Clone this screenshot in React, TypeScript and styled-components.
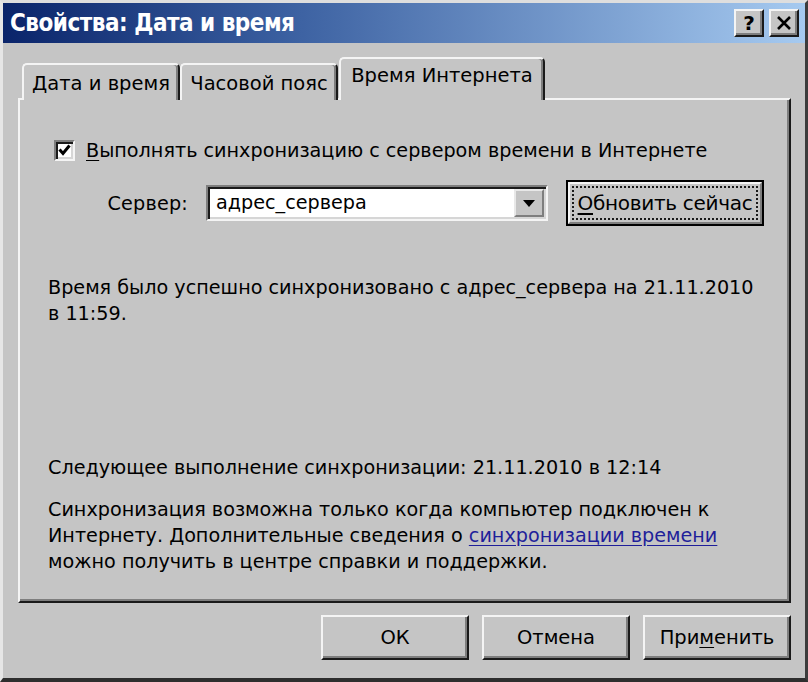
import React from "react";
import styled, { createGlobalStyle, css } from "styled-components";

const FONT = `"DejaVu Sans", "Liberation Sans", sans-serif`;

const GlobalStyle = createGlobalStyle`
  html, body {
    margin: 0;
    padding: 0;
    background: #c5c5c5;
  }
  body {
    font-family: ${FONT};
    color: #000;
  }
`;

const raised = css`
  border-top: 2px solid #f4f4f4;
  border-left: 2px solid #f4f4f4;
  border-right: 2px solid #1a1a1a;
  border-bottom: 2px solid #1a1a1a;
  box-shadow: inset -2px -2px 0 #7e7e7e;
`;

const sunken = css`
  border-top: 2px solid #7e7e7e;
  border-left: 2px solid #7e7e7e;
  border-right: 2px solid #f4f4f4;
  border-bottom: 2px solid #f4f4f4;
  box-shadow: inset 2px 2px 0 #1a1a1a, inset -2px -2px 0 #d6d6d6;
`;

const Window = styled.div`
  width: 808px;
  height: 682px;
  box-sizing: border-box;
  background: #c5c5c5;
  border-top: 3px solid #dedede;
  border-left: 3px solid #e6e6e6;
  border-right: 3px solid #3c3c3c;
  border-bottom: 4px solid #2e2e2e;
  display: flex;
  flex-direction: column;
`;

const TitleBar = styled.div`
  height: 40px;
  flex: none;
  display: flex;
  align-items: center;
  padding: 0 6px 0 7px;
  background: linear-gradient(90deg, #0a246a 0%, #3a5fa0 35%, #a6caf0 100%);
`;

const Caption = styled.div`
  flex: 1;
  color: #fff;
  font-family: "DejaVu Sans Condensed", "DejaVu Sans", sans-serif;
  font-weight: bold;
  font-size: 24px;
  letter-spacing: -0.5px;
  transform-origin: left center;
`;

const CaptionButton = styled.div`
  width: 30px;
  height: 28px;
  box-sizing: border-box;
  margin-left: 5px;
  background: #c5c5c5;
  ${raised};
  display: flex;
  align-items: center;
  justify-content: center;
  font-weight: bold;
  font-size: 20px;
`;

const Body = styled.div`
  flex: 1;
  display: flex;
  flex-direction: column;
  padding: 14px 15px 0 15px;
`;

const TabRow = styled.div`
  height: 43px;
  display: flex;
  align-items: flex-end;
  padding-left: 4px;
  position: relative;
  z-index: 1;
  margin-bottom: -2px;
`;

const Tab = styled.div<{ $active?: boolean; $w: number }>`
  box-sizing: border-box;
  width: ${(p) => p.$w}px;
  height: ${(p) => (p.$active ? 43 : 37)}px;
  margin-right: ${(p) => (p.$active ? "-2px" : "0")};
  margin-left: ${(p) => (p.$active ? "1px" : "0")};
  padding-top: ${(p) => (p.$active ? 5 : 7)}px;
  text-align: center;
  font-size: 19.5px;
  background: #c5c5c5;
  border-top: 2px solid #f4f4f4;
  border-left: 2px solid #f4f4f4;
  border-right: 2px solid #1a1a1a;
  border-radius: 5px 5px 0 0;
  box-shadow: inset -2px 0 0 #7e7e7e;
  ${(p) => p.$active && css`z-index: 2;`}
`;

const Panel = styled.div`
  height: 505px;
  box-sizing: border-box;
  width: 773px;
  border-top: 2px solid #f4f4f4;
  border-left: 2px solid #f4f4f4;
  border-right: 2px solid #1a1a1a;
  border-bottom: 2px solid #1a1a1a;
  box-shadow: inset -2px -2px 0 #7e7e7e;
  padding: 38px 0 0 30px;
  font-size: 19.2px;
  display: flex;
  flex-direction: column;
`;

const CheckRow = styled.div`
  display: flex;
  align-items: center;
  height: 24px;
  padding-left: 4px;
`;

const CheckBox = styled.div`
  width: 21px;
  height: 21px;
  box-sizing: border-box;
  background: #fff;
  ${sunken};
  display: flex;
  align-items: center;
  justify-content: center;
  margin-right: 11px;
`;

const Accel = styled.span`
  text-decoration: underline;
  text-underline-offset: 3px;
`;

const ServerRow = styled.div`
  display: flex;
  align-items: center;
  margin-top: 18px;
  height: 46px;
`;

const Label = styled.div`
  width: 156px;
  text-align: right;
  padding-right: 18px;
  box-sizing: border-box;
  letter-spacing: 0.2px;
`;

const Combo = styled.div`
  width: 342px;
  height: 36px;
  box-sizing: border-box;
  ${sunken};
  background: #fff;
  display: flex;
  align-items: stretch;
`;

const ComboText = styled.div`
  flex: 1;
  padding: 4px 0 0 8px;
`;

const DropButton = styled.div`
  width: 30px;
  margin: 2px 2px 2px 0;
  box-sizing: border-box;
  background: #c5c5c5;
  border-top: 2px solid #e8e8e8;
  border-left: 2px solid #e8e8e8;
  border-right: 2px solid #7e7e7e;
  border-bottom: 2px solid #7e7e7e;
  display: flex;
  align-items: center;
  justify-content: center;
`;

const DefaultButton = styled.div`
  margin-left: 18px;
  width: 198px;
  height: 46px;
  box-sizing: border-box;
  border: 2px solid #000;
  display: flex;
`;

const ButtonFace = styled.div`
  flex: 1;
  background: #c5c5c5;
  border-top: 2px solid #f4f4f4;
  border-left: 2px solid #f4f4f4;
  border-right: 2px solid #7e7e7e;
  border-bottom: 2px solid #7e7e7e;
  padding: 2px;
  display: flex;
`;

const FocusRect = styled.div`
  flex: 1;
  border: 2px dotted #1a1a1a;
  display: flex;
  align-items: center;
  justify-content: center;
  font-size: 20px;
  letter-spacing: -0.3px;
  white-space: nowrap;
`;

const Paragraph = styled.div<{ $mt: number }>`
  margin-top: ${(p) => p.$mt}px;
  margin-left: -2px;
  line-height: 26px;
`;

const Link = styled.span`
  color: #1f1f9a;
  text-decoration: underline;
  text-underline-offset: 3px;
`;

const Footer = styled.div`
  display: flex;
  justify-content: flex-end;
  gap: 13px;
  width: 773px;
  margin-top: 12px;
`;

const PushButton = styled.div`
  width: 148px;
  height: 45px;
  box-sizing: border-box;
  background: #c5c5c5;
  ${raised};
  display: flex;
  align-items: center;
  justify-content: center;
  font-size: 19.5px;
`;

export default function App() {
  return (
    <>
      <GlobalStyle />
      <Window>
        <TitleBar>
          <Caption>Свойства: Дата и время</Caption>
          <CaptionButton>?</CaptionButton>
          <CaptionButton>
            <svg width="16" height="14" viewBox="0 0 16 14">
              <path d="M2 1 L14 13 M14 1 L2 13" stroke="#000" strokeWidth="2.6" />
            </svg>
          </CaptionButton>
        </TitleBar>
        <Body>
          <TabRow>
            <Tab $w={158}>Дата и время</Tab>
            <Tab $w={158}>Часовой пояс</Tab>
            <Tab $w={206} $active>
              Время Интернета
            </Tab>
          </TabRow>
          <Panel>
            <CheckRow>
              <CheckBox>
                <svg width="13" height="12" viewBox="0 0 13 12">
                  <path d="M1.5 5.5 L5 9.5 L11.5 1.5" stroke="#000" strokeWidth="3" fill="none" />
                </svg>
              </CheckBox>
              <span>
                <Accel>В</Accel>ыполнять синхронизацию с сервером времени в Интернете
              </span>
            </CheckRow>
            <ServerRow>
              <Label>Сервер:</Label>
              <Combo>
                <ComboText>адрес_сервера</ComboText>
                <DropButton>
                  <svg width="12" height="7" viewBox="0 0 12 7">
                    <path d="M0 0 H12 L6 7 Z" fill="#000" />
                  </svg>
                </DropButton>
              </Combo>
              <DefaultButton>
                <ButtonFace>
                  <FocusRect>
                    <span>
                      <Accel>О</Accel>бновить сейчас
                    </span>
                  </FocusRect>
                </ButtonFace>
              </DefaultButton>
            </ServerRow>
            <Paragraph $mt={49}>
              Время было успешно синхронизовано с адрес_сервера на 21.11.2010
              <br />в 11:59.
            </Paragraph>
            <Paragraph $mt={128}>
              Следующее выполнение синхронизации: 21.11.2010 в 12:14
            </Paragraph>
            <Paragraph $mt={16}>
              Синхронизация возможна только когда компьютер подключен к
              <br />
              Интернету. Дополнительные сведения о <Link>синхронизации времени</Link>
              <br />
              можно получить в центре справки и поддержки.
            </Paragraph>
          </Panel>
          <Footer>
            <PushButton>ОК</PushButton>
            <PushButton>Отмена</PushButton>
            <PushButton>
              <span>
                При<Accel>м</Accel>енить
              </span>
            </PushButton>
          </Footer>
        </Body>
      </Window>
    </>
  );
}
